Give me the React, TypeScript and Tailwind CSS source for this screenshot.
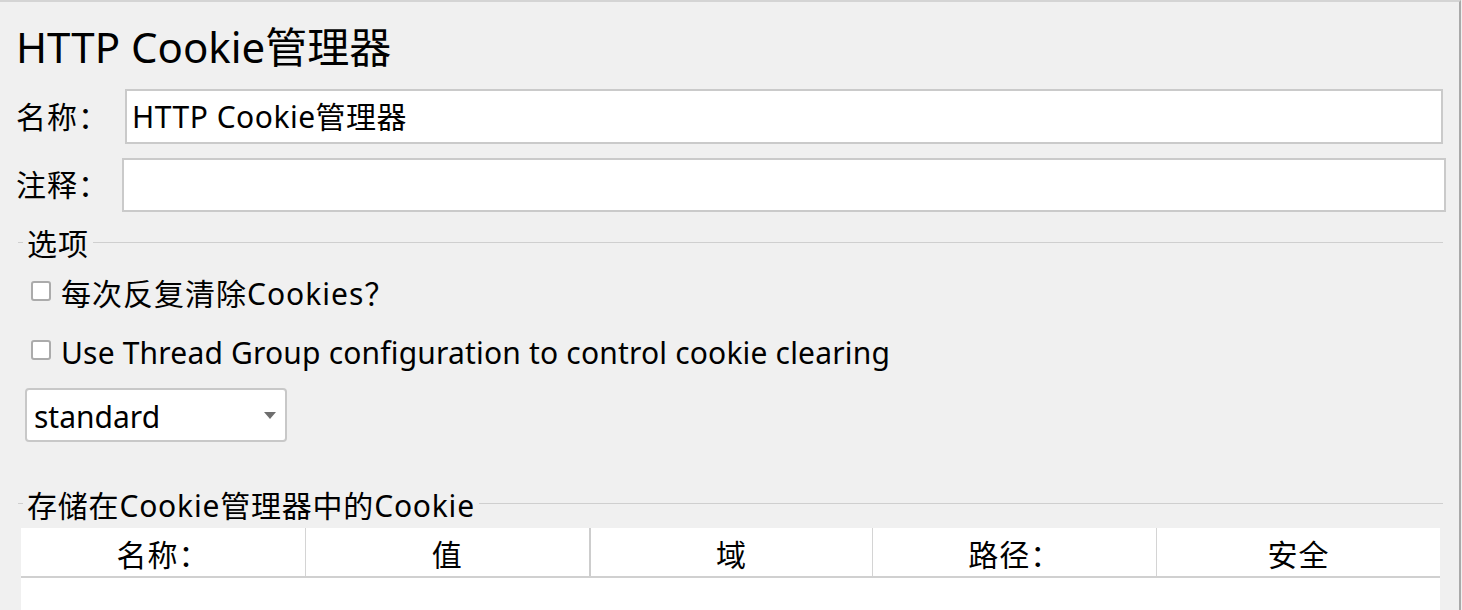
import React from "react";

function SectionTitle({ text, top, lineTop, track }: { text: string; top: string; lineTop: string; track: string }) {
  return (
    <div className={`flex h-[30px] ${top}`}>
      <div className={`ml-[18px] h-[1px] w-[5px] bg-[#cfcfcf] ${lineTop}`} />
      <div className={`px-[4px] text-[30px] leading-[30px] whitespace-nowrap ${track}`}>{text}</div>
      <div className={`h-[1px] w-[1px] flex-1 mr-[16px] bg-[#cfcfcf] ${lineTop}`} />
    </div>
  );
}

function Check({ label, top, track }: { label: string; top: string; track: string }) {
  return (
    <div className={`flex items-center h-[30px] ${top}`}>
      <div className="ml-[31px] w-[20px] h-[20px] bg-white border-2 border-[#ababab] rounded-[3px]" />
      <div className={`ml-[10px] mt-[5px] text-[30px] leading-[30px] whitespace-nowrap ${track}`}>{label}</div>
    </div>
  );
}

export default function App() {
  const cols = ["名称：", "值", "域", "路径：", "安全"];
  return (
    <div className="w-[1462px] h-[610px] overflow-hidden bg-[#f0f0f0] text-black font-['Noto_Sans','Noto_Sans_CJK_SC',sans-serif]">
      <div className="w-[1461px] h-[610px] border-t-2 border-r-2 border-t-[#d4d4d4] border-r-[#a9a9a9] flex flex-col">
        <div className="mt-[24px] ml-[16px] text-[42px] leading-[42px] whitespace-nowrap">HTTP Cookie管理器</div>
        <div className="mt-[21px] flex items-center h-[55px]">
          <div className="ml-[16px] w-[109px] text-[30px] leading-[30px] tracking-[1px]">名称：</div>
          <div className="w-[1318px] h-[55px] bg-white border-2 border-[#cacaca] flex items-center pl-[5px] text-[30px] leading-[30px] whitespace-nowrap tracking-[0.5px]">
            HTTP Cookie管理器
          </div>
        </div>
        <div className="mt-[14px] flex items-center h-[54px]">
          <div className="ml-[16px] w-[106px] text-[30px] leading-[30px] tracking-[1px]">注释：</div>
          <div className="w-[1324px] h-[54px] bg-white border-2 border-[#cacaca]" />
        </div>
        <SectionTitle text="选项" top="mt-[17px]" lineTop="mt-[13px]" track="tracking-[1px]" />
        <Check label="每次反复清除Cookies？" top="mt-[17px]" track="tracking-[1px]" />
        <Check label="Use Thread Group configuration to control cookie clearing" top="mt-[29px]" track="tracking-[0.18px]" />
        <div className="mt-[23px] ml-[25px] w-[262px] h-[54px] bg-white border-2 border-[#c8c8c8] rounded-[4px] flex items-center justify-between pl-[7px] pr-[9px]">
          <span className="text-[30px] leading-[30px] mt-[3px]">standard</span>
          <svg width="12" height="7" viewBox="0 0 12 7">
            <path d="M0 0 L12 0 L6 7 Z" fill="#6e6e6e" />
          </svg>
        </div>
        <SectionTitle text="存储在Cookie管理器中的Cookie" top="mt-[49px]" lineTop="mt-[12px]" track="tracking-[0.8px]" />
        <div className="mt-[7px] ml-[21px] w-[1419px] flex-1 bg-white flex flex-col">
          <div className="grid grid-cols-5 h-[50px] border-b-2 border-[#d0d0d0]">
            {cols.map((c, i) => (
              <div
                key={c}
                className={`flex items-center justify-center pt-[5px] text-[30px] leading-[30px] tracking-[1px] ${
                  i === 0 ? "" : i === 2 ? "border-l-2 border-[#cdcdcd]" : "border-l border-[#d4d4d4]"
                }`}
              >
                {c}
              </div>
            ))}
          </div>
          <div className="flex-1" />
        </div>
      </div>
    </div>
  );
}
